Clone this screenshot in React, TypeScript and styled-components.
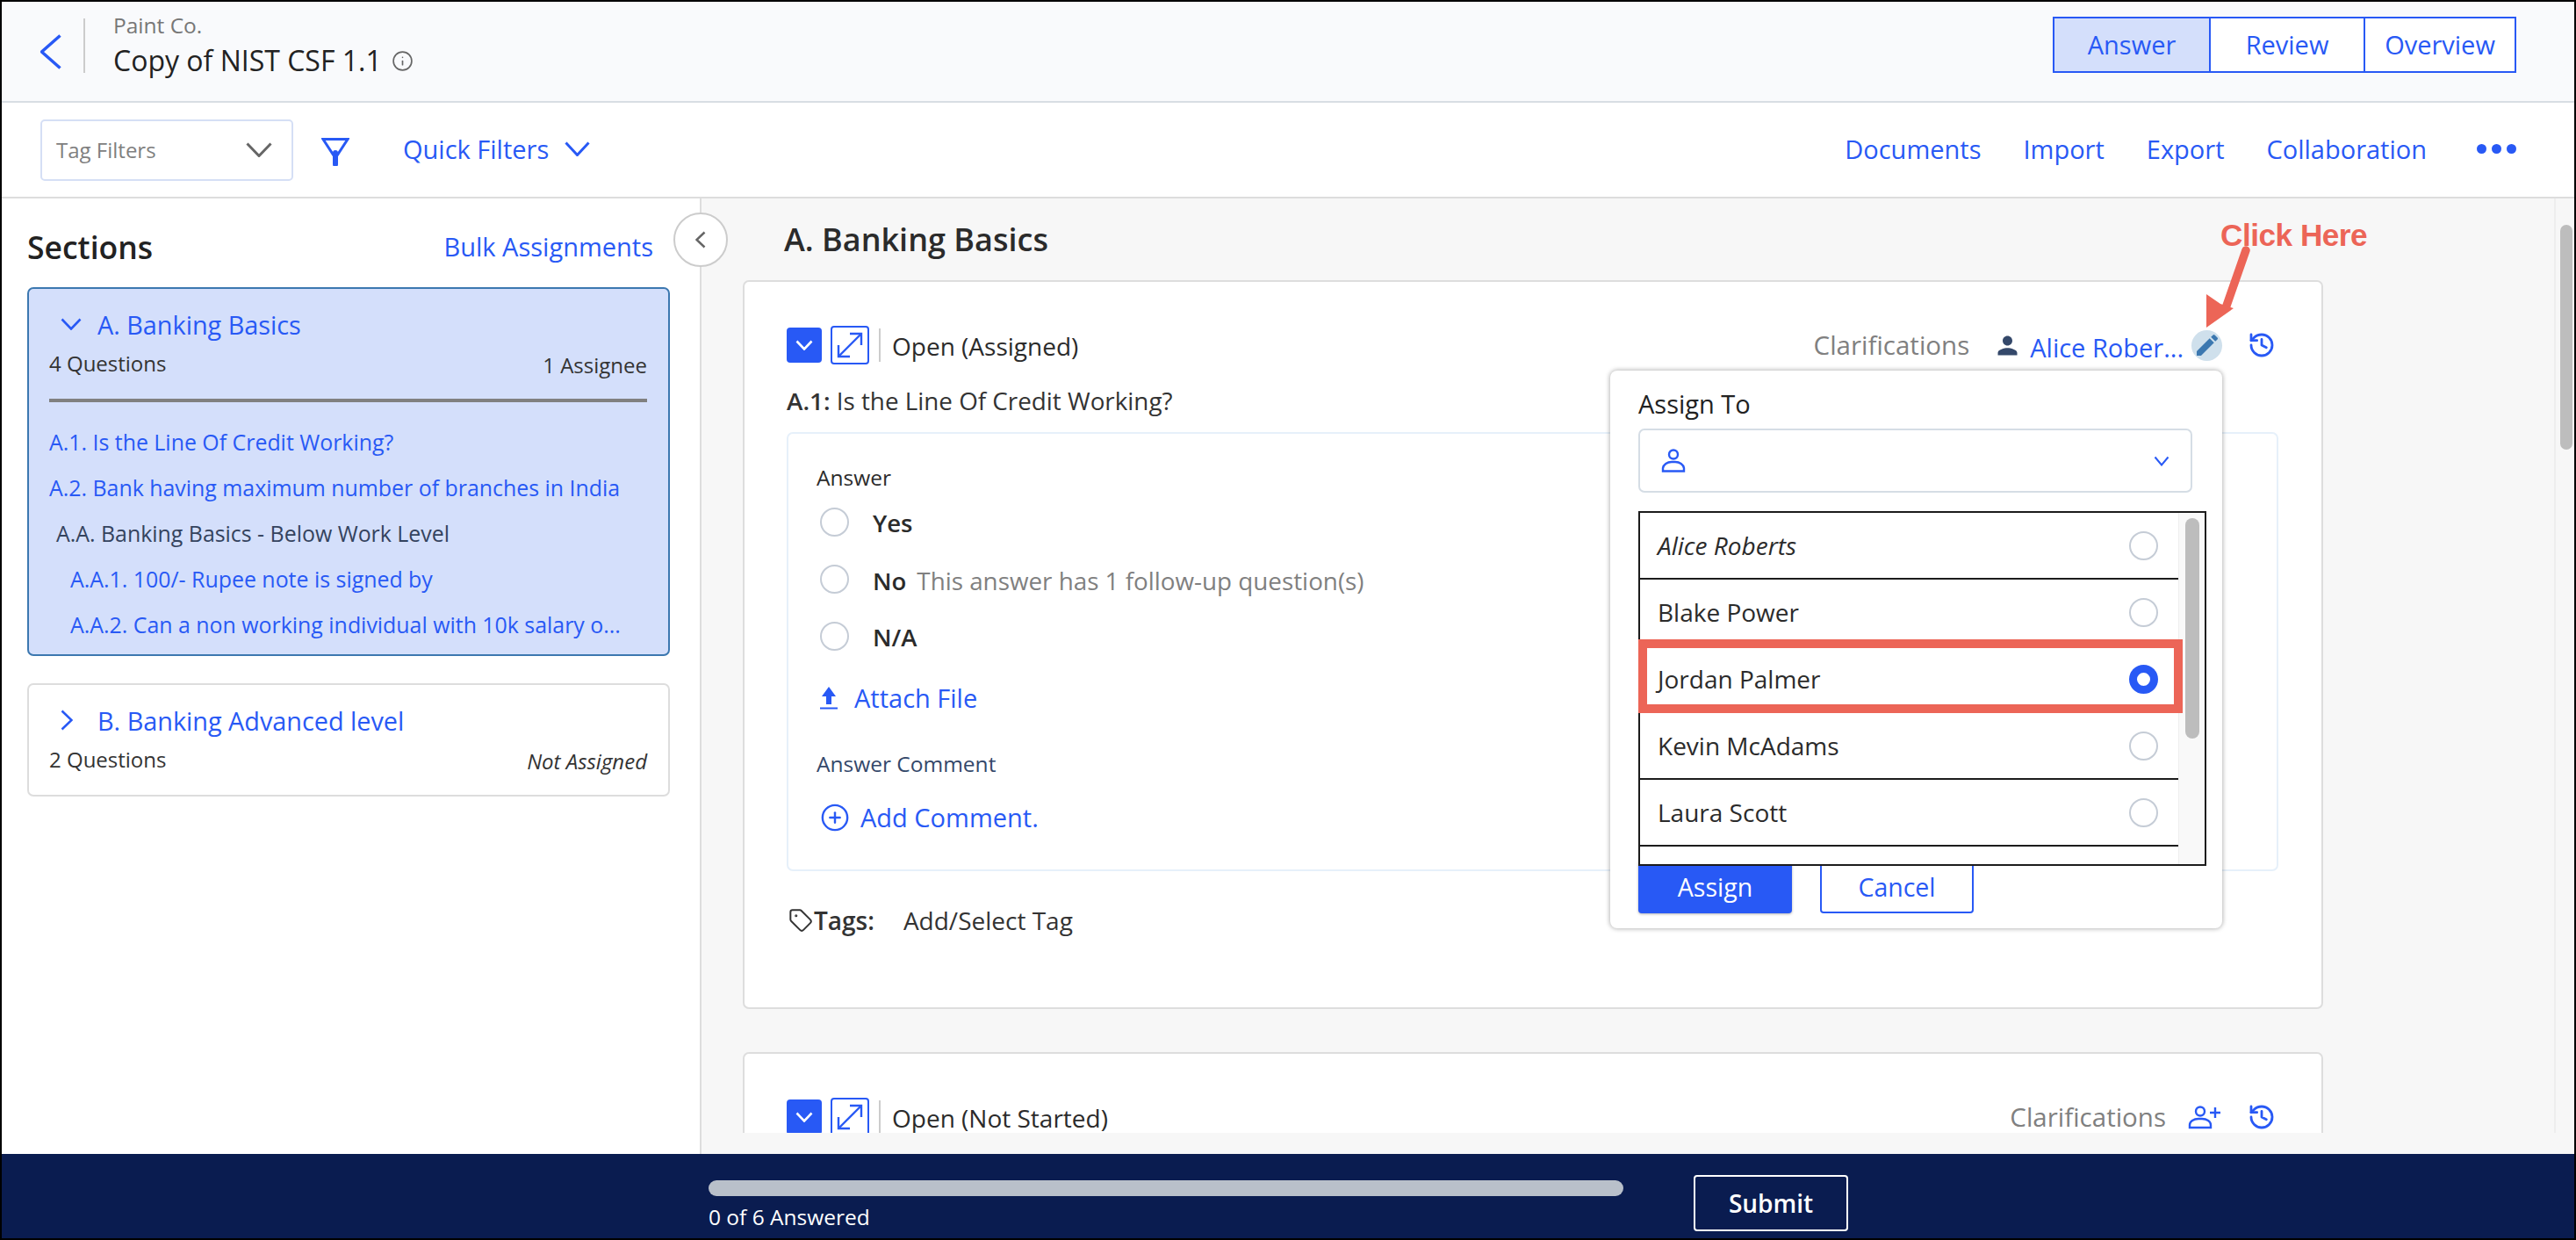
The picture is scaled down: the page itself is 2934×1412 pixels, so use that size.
import React from "react";
import styled, { createGlobalStyle } from "styled-components";
import { MdEdit, MdPerson } from "react-icons/md";
import { History, CirclePlus, Tag, Info } from "lucide-react";

const BLUE = "#2859f5";
const RED = "#ec6557";

const Global = createGlobalStyle`
  html, body { margin: 0; padding: 0; background: #fff; }
  body { font-family: "Open Sans", "Noto Sans", sans-serif; color: #2b2b2b; }
  * { box-sizing: border-box; }
`;

const Frame = styled.div`
  position: relative; width: 2934px; height: 1412px; border: 2px solid #000;
  display: flex; flex-direction: column; overflow: hidden; background: #fff;
`;

const Header = styled.header`
  height: 115px; flex: none; background: #f9fafc; border-bottom: 2px solid #d8dee3;
  display: flex; align-items: center; padding: 0 66px 0 44px;
`;
const BackLink = styled.span`display: flex; width: 24px; margin-right: 25px; color: ${BLUE};`;
const HeaderRule = styled.span`width: 2px; height: 62px; background: #ccc; margin-right: 32px; margin-top: -14px;`;
const TitleBlock = styled.div`display: flex; flex-direction: column; margin-top: -14px;`;
const Org = styled.div`font-size: 24.5px; line-height: 28px; color: #777;`;
const Title = styled.div`font-size: 32px; font-weight: 500; line-height: 38px; margin-top: 7px; display: flex; align-items: center; gap: 11px; color: #222;`;
const InfoMark = styled.span`display: flex; color: #666;`;

const Segmented = styled.div`
  margin-left: auto; margin-top: -15px; width: 528px; height: 64px; border: 2px solid ${BLUE};
  display: grid; grid-template-columns: 176px 176px 1fr; background: #fff;
`;
const Segment = styled.div<{ $active?: boolean }>`
  display: flex; align-items: center; justify-content: center; font-size: 29px; font-weight: 500; color: ${BLUE}; padding-bottom: 2px;
  background: ${(p) => (p.$active ? "#d4dffb" : "#fff")};
  & + & { border-left: 2px solid ${BLUE}; }
`;

const Toolbar = styled.div`
  height: 109px; flex: none; border-bottom: 2px solid #ddd; display: flex; align-items: center; padding: 0 66px 0 44px;
`;
const TagFilter = styled.div`
  width: 288px; height: 70px; border: 2px solid #d5dff5; border-radius: 5px; display: flex; align-items: center;
  justify-content: space-between; padding: 0 22px 0 16px; font-size: 24px; color: #808080; background: #fff;
`;
const FunnelWrap = styled.span`display: flex; margin-left: 32px; margin-top: 3px;`;
const QuickFilters = styled.div`
  margin-left: 61px; display: flex; align-items: center; gap: 18px; color: ${BLUE}; font-size: 29px; font-weight: 500; margin-top: -2px;
`;
const ToolLinks = styled.nav`margin-left: auto; display: flex; align-items: center; gap: 48px; margin-top: -2px;`;
const ToolLink = styled.span`color: ${BLUE}; font-size: 29px; font-weight: 500;`;
const Dots = styled.span`display: flex; gap: 6px; margin-left: 9px; margin-top: 0;`;
const Dot = styled.span`width: 11px; height: 11px; border-radius: 50%; background: ${BLUE};`;

const Body = styled.div`flex: 1; display: flex; min-height: 0;`;
const Sidebar = styled.aside`
  position: relative; width: 797px; flex: none; border-right: 2px solid #ddd; padding: 0 0 0 29px; background: #fff;
`;
const SidebarHead = styled.div`
  width: 713px; height: 101px; display: flex; align-items: center; justify-content: space-between; padding-top: 8px;
`;
const SidebarTitle = styled.div`font-size: 35.5px; font-weight: 600; color: #222;`;
const BulkLink = styled.span`font-size: 29px; font-weight: 500; color: ${BLUE};`;
const Collapse = styled.span`
  position: absolute; right: -32px; top: 16px; width: 62px; height: 62px; border-radius: 50%; background: #fff;
  border: 2px solid #ccc; display: flex; align-items: center; justify-content: center; z-index: 2;
`;
const SectionCard = styled.section<{ $active?: boolean }>`
  width: 732px; border-radius: 7px; padding: 0 24px 0 23px;
  border: 2px solid ${(p) => (p.$active ? "#3c78b0" : "#ddd")};
  background: ${(p) => (p.$active ? "#d4dffb" : "#fff")};
  height: ${(p) => (p.$active ? "420px" : "129px")};
  & + & { margin-top: 31px; }
`;
const SectionHead = styled.div`display: flex; align-items: center; height: 36px; margin-top: 22px; color: ${BLUE}; font-size: 28.8px; font-weight: 500;`;
const SectionChevron = styled.span`display: flex; width: 55px; padding-left: 13px;`;
const SectionMeta = styled.div`display: flex; justify-content: space-between; font-size: 24px; line-height: 30px; margin-top: 12px; color: #333;`;
const MetaRight = styled.span<{ $italic?: boolean }>`margin-top: 2px; font-style: ${(p) => (p.$italic ? "italic" : "normal")};`;
const SectionRule = styled.div`height: 4px; background: #808080; margin-top: 23px; margin-bottom: 23px;`;
const QuestionLink = styled.div<{ $indent?: number; $plain?: boolean }>`
  height: 52px; line-height: 44px; font-size: 24.9px; font-weight: 500; white-space: nowrap;
  padding-left: ${(p) => p.$indent || 0}px; color: ${(p) => (p.$plain ? "#34435e" : BLUE)};
`;

const Content = styled.main`flex: 1; display: flex; flex-direction: column; background: #f7f7f7; min-width: 0;`;
const Viewport = styled.div`height: 1064px; display: flex; overflow: hidden;`;
const Scroller = styled.div`flex: 1; padding-left: 47px; min-width: 0;`;
const MainHeading = styled.h1`
  margin: 0; height: 93px; display: flex; align-items: center; padding: 0 0 0 47px; font-size: 36px; font-weight: 600; color: #2b2b2b;
`;
const QuestionCard = styled.article<{ $height: number }>`
  position: relative; width: 1800px; height: ${(p) => p.$height}px; background: #fff; border: 2px solid #ddd; border-radius: 7px;
  padding: 50px 52px 0 48px;
  & + & { margin-top: 49px; }
`;
const CardTop = styled.div`height: 44px; display: flex; align-items: center;`;
const ToggleButton = styled.span`
  width: 40px; height: 40px; border-radius: 4px; background: ${BLUE}; display: flex; align-items: center; justify-content: center;
`;
const ExpandButton = styled.span`
  width: 44px; height: 44px; margin-left: 10px; border: 2px solid ${BLUE}; border-radius: 4px; display: flex; align-items: center; justify-content: center;
`;
const StatusRule = styled.span`width: 2px; height: 38px; background: #ccc; margin: 0 13px 0 11px;`;
const Status = styled.span`font-size: 28px; line-height: 36px; padding-top: 1px; color: #2b2b2b;`;
const CardActions = styled.div`margin-left: auto; display: flex; align-items: center;`;
const Clarify = styled.span<{ $gap: number }>`font-size: 29.5px; line-height: 36px; font-weight: 500; color: #808080; margin-right: ${(p) => p.$gap}px;`;
const PersonIcon = styled.span`display: flex; color: #34486a; margin-right: 9px; margin-left: -4px;`;
const Assignee = styled.span`color: ${BLUE}; font-size: 29px; font-weight: 500; margin-top: 4px;`;
const PencilBadge = styled.span`
  width: 35px; height: 35px; border-radius: 50%; background: #cfe0ec; color: #3c78b0; display: flex; align-items: center; justify-content: center;
  margin: 0 29px 0 9px;
`;
const AddUser = styled.span`display: flex; margin-right: 30px;`;
const HistoryMark = styled.span`display: flex; color: ${BLUE};`;
const QuestionLine = styled.div`font-size: 27.8px; line-height: 36px; margin-top: 23px; color: #333;`;
const QuestionNo = styled.span`font-weight: 600;`;

const AnswerBox = styled.div`
  margin: 18px -3px 0 0; height: 500px; border: 2px solid #e6f0fa; border-radius: 7px; padding: 36px 32px 0;
`;
const FieldLabel = styled.div<{ $muted?: boolean; $top?: number }>`
  font-size: 24.5px; line-height: 28px; font-weight: 500; color: ${(p) => (p.$muted ? "#34486a" : "#2b2b2b")};
  margin-top: ${(p) => p.$top || 0}px;
`;
const Options = styled.div`margin-top: 4px;`;
const OptionRow = styled.div`height: 65px; display: flex; align-items: center; padding-left: 4px; gap: 27px; font-size: 27.5px; font-weight: 600;`;
const Radio = styled.span<{ $on?: boolean }>`
  flex: none; width: 33px; height: 33px; border-radius: 50%;
  border: ${(p) => (p.$on ? `9px solid ${BLUE}` : "2.5px solid #c5ccd6")}; background: #fff;
`;
const OptionLabel = styled.span`color: #2b2b2b; margin-top: 2px;`;
const FollowUp = styled.span`color: #808080; font-weight: 400; font-size: 27.8px; margin-left: 12px;`;
const ActionLink = styled.div<{ $top: number; $gap: number }>`
  display: flex; align-items: center; height: 36px; margin-top: ${(p) => p.$top}px; padding-left: 4px; gap: ${(p) => p.$gap}px;
  color: ${BLUE}; font-size: 29px; font-weight: 500; line-height: 32px;
`;
const TagsRow = styled.div`display: flex; align-items: center; height: 36px; margin-top: 38px; font-size: 28px; color: #333;`;
const TagsLabel = styled.span`font-weight: 600; margin-right: 33px; margin-left: 1px;`;
const TagIcon = styled.span`display: flex; color: #333; margin-left: 2px;`;

const Popover = styled.div`
  position: absolute; left: 986px; top: 101px; width: 697px; height: 635px; background: #fff; border-radius: 8px;
  box-shadow: 0 0 5px 1px rgba(0, 0, 0, 0.28); padding: 20px 32px 0; z-index: 3;
`;
const PopoverTitle = styled.div`font-size: 29px; font-weight: 500; line-height: 36px; color: #222;`;
const AssignSelect = styled.div`
  margin-top: 10px; width: 631px; height: 73px; border: 2px solid #d5dde5; border-radius: 7px; display: flex; align-items: center;
  justify-content: space-between; padding: 0 24px;
`;
const PeopleList = styled.div`
  position: relative; z-index: 1; margin-top: 21px; width: 647px; height: 404px; border: 2px solid #1c1c1c; background: #fff; display: flex;
`;
const Rows = styled.div`flex: 1; overflow: hidden; min-width: 0;`;
const PersonRow = styled.div<{ $italic?: boolean }>`
  height: 76px; border-bottom: 2px solid #1c1c1c; display: flex; align-items: center; justify-content: space-between;
  padding: 0 23px 0 20px; font-size: 28px; color: #2b2b2b; font-style: ${(p) => (p.$italic ? "italic" : "normal")};
`;
const ListTrack = styled.div`width: 30px; flex: none; background: #f9f9f9; border-left: 1px solid #eee; padding: 6px 6px 0 7px;`;
const ListThumb = styled.div`height: 251px; border-radius: 8px; background: #bdbdbd;`;
const Highlight = styled.div`
  position: absolute; left: -2px; top: 144px; width: 620px; height: 84px; border: 10px solid ${RED}; pointer-events: none;
`;
const ButtonRow = styled.div`display: flex; gap: 32px; margin-top: -6px;`;
const PrimaryButton = styled.span`
  width: 175px; height: 60px; background: ${BLUE}; color: #fff; font-size: 28.5px; font-weight: 500; border-radius: 4px;
  display: flex; align-items: center; justify-content: center; box-shadow: 0 1px 3px rgba(0,0,0,.3);
`;
const SecondaryButton = styled(PrimaryButton)`background: #fff; color: ${BLUE}; border: 2px solid ${BLUE}; box-shadow: none;`;

const ScrollTrack = styled.div`width: 23px; flex: none; border-left: 2px solid #eee; padding: 30px 2px 0 5px;`;
const ScrollThumb = styled.div`height: 256px; border-radius: 8px; background: #bdbdbd;`;

const Footer = styled.footer`
  height: 96px; flex: none; background: #0a1c50; display: flex; align-items: flex-start; padding: 24px 0 0 805px; margin-top: 0;
`;
const Progress = styled.div`width: 1042px; padding-top: 6px;`;
const ProgressBar = styled.div`height: 18px; border-radius: 9px; background: #b9c0ca;`;
const ProgressText = styled.div`color: #fff; font-size: 24.5px; line-height: 28px; margin-top: 10px; font-weight: 500;`;
const SubmitButton = styled.span`
  margin-left: 80px; width: 176px; height: 64px; border: 2px solid #fff; border-radius: 4px; color: #fff; font-size: 28px; font-weight: 600;
  display: flex; align-items: center; justify-content: center;
`;

const CalloutText = styled.div`
  position: absolute; left: 2527px; top: 246px; font-family: "Liberation Sans", Arial, sans-serif; font-weight: 700; font-size: 35.2px; line-height: 40px;
  color: ${RED}; z-index: 5; letter-spacing: -0.5px;
`;
const CalloutArrow = styled.svg`position: absolute; left: 2498px; top: 276px; z-index: 5;`;

type ChevronProps = { w: number; h: number; dir?: "down" | "right" | "left"; color?: string; sw?: number };
const Chevron = ({ w, h, dir = "down", color = BLUE, sw = 3 }: ChevronProps) => {
  const pts =
    dir === "down"
      ? `1.5,1.5 ${w / 2},${h - 1.5} ${w - 1.5},1.5`
      : dir === "right"
      ? `1.5,1.5 ${w - 1.5},${h / 2} 1.5,${h - 1.5}`
      : `${w - 1.5},1.5 1.5,${h / 2} ${w - 1.5},${h - 1.5}`;
  return (
    <svg width={w} height={h} viewBox={`0 0 ${w} ${h}`} fill="none">
      <polyline points={pts} stroke={color} strokeWidth={sw} />
    </svg>
  );
};

const FunnelIcon = () => (
  <svg width="32" height="33" viewBox="0 0 32 33" fill="none">
    <path d="M2 2.5 H30 L16 24 Z" stroke={BLUE} strokeWidth="3" strokeLinejoin="miter" />
    <path d="M16 18 V31" stroke={BLUE} strokeWidth="6" strokeLinecap="round" />
  </svg>
);
const ExpandIcon = () => (
  <svg width="36" height="36" viewBox="0 0 36 36" fill="none" stroke={BLUE} strokeWidth="2.4">
    <path d="M5 31 L31 5" />
    <path d="M18 5 H31 V18" />
    <path d="M5 18 V31 H18" />
  </svg>
);
const UploadIcon = () => (
  <svg width="20" height="26" viewBox="0 0 20 26" fill={BLUE}>
    <path d="M10 0 L18 11 H13 V20 H7 V11 H2 Z" />
    <rect x="0" y="23.5" width="20" height="2" />
  </svg>
);
const OutlineUser = () => (
  <svg width="28" height="27" viewBox="0 0 28 27" fill="none" stroke={BLUE} strokeWidth="2.4">
    <circle cx="14" cy="6.5" r="5" />
    <path d="M2 25.5 V22 A10 8 0 0 1 12 15 H16 A10 8 0 0 1 26 22 V25.5 Z" />
  </svg>
);
const AddUserIcon = () => (
  <svg width="38" height="28" viewBox="0 0 38 28" fill="none" stroke={BLUE} strokeWidth="2.4">
    <circle cx="14" cy="7.5" r="5" />
    <path d="M2 26 V23 A10 7 0 0 1 12 16 H16 A10 7 0 0 1 26 23 V26 Z" />
    <path d="M25 9 H37 M31 3 V15" />
  </svg>
);

const people = ["Alice Roberts", "Blake Power", "Jordan Palmer", "Kevin McAdams", "Laura Scott", ""];

export default function App() {
  return (
    <Frame>
      <Global />
      <Header>
        <BackLink><Chevron w={24} h={40} dir="left" sw={3.5} /></BackLink>
        <HeaderRule />
        <TitleBlock>
          <Org>Paint Co.</Org>
          <Title>
            Copy of NIST CSF 1.1
            <InfoMark><Info size={25} strokeWidth={1.6} /></InfoMark>
          </Title>
        </TitleBlock>
        <Segmented>
          <Segment $active>Answer</Segment>
          <Segment>Review</Segment>
          <Segment>Overview</Segment>
        </Segmented>
      </Header>

      <Toolbar>
        <TagFilter>
          Tag Filters
          <Chevron w={30} h={17} color="#666" sw={3} />
        </TagFilter>
        <FunnelWrap><FunnelIcon /></FunnelWrap>
        <QuickFilters>
          Quick Filters
          <Chevron w={29} h={17} sw={3} />
        </QuickFilters>
        <ToolLinks>
          <ToolLink>Documents</ToolLink>
          <ToolLink>Import</ToolLink>
          <ToolLink>Export</ToolLink>
          <ToolLink>Collaboration</ToolLink>
          <Dots><Dot /><Dot /><Dot /></Dots>
        </ToolLinks>
      </Toolbar>

      <Body>
        <Sidebar>
          <SidebarHead>
            <SidebarTitle>Sections</SidebarTitle>
            <BulkLink>Bulk Assignments</BulkLink>
          </SidebarHead>
          <Collapse><Chevron w={12} h={20} dir="left" color="#666" sw={2.5} /></Collapse>
          <SectionCard $active>
            <SectionHead>
              <SectionChevron><Chevron w={24} h={14} sw={2.6} /></SectionChevron>
              A. Banking Basics
            </SectionHead>
            <SectionMeta><span>4 Questions</span><MetaRight>1 Assignee</MetaRight></SectionMeta>
            <SectionRule />
            <QuestionLink>A.1. Is the Line Of Credit Working?</QuestionLink>
            <QuestionLink>A.2. Bank having maximum number of branches in India</QuestionLink>
            <QuestionLink $indent={8} $plain>A.A. Banking Basics - Below Work Level</QuestionLink>
            <QuestionLink $indent={24}>A.A.1. 100/- Rupee note is signed by</QuestionLink>
            <QuestionLink $indent={24}>A.A.2. Can a non working individual with 10k salary o...</QuestionLink>
          </SectionCard>
          <SectionCard>
            <SectionHead>
              <SectionChevron><Chevron w={14} h={24} dir="right" sw={2.6} /></SectionChevron>
              B. Banking Advanced level
            </SectionHead>
            <SectionMeta><span>2 Questions</span><MetaRight $italic>Not Assigned</MetaRight></SectionMeta>
          </SectionCard>
        </Sidebar>

        <Content>
          <Viewport>
            <Scroller>
              <MainHeading>A. Banking Basics</MainHeading>
              <QuestionCard $height={830}>
                <CardTop>
                  <ToggleButton><Chevron w={20} h={12} color="#fff" sw={2.6} /></ToggleButton>
                  <ExpandButton><ExpandIcon /></ExpandButton>
                  <StatusRule />
                  <Status>Open (Assigned)</Status>
                  <CardActions>
                    <Clarify $gap={31}>Clarifications</Clarify>
                    <PersonIcon><MdPerson size={33} /></PersonIcon>
                    <Assignee>Alice Rober...</Assignee>
                    <PencilBadge><MdEdit size={32} /></PencilBadge>
                    <HistoryMark><History size={32} strokeWidth={2.1} /></HistoryMark>
                  </CardActions>
                </CardTop>
                <QuestionLine><QuestionNo>A.1:</QuestionNo> Is the Line Of Credit Working?</QuestionLine>
                <AnswerBox>
                  <FieldLabel>Answer</FieldLabel>
                  <Options>
                    <OptionRow><Radio /><OptionLabel>Yes</OptionLabel></OptionRow>
                    <OptionRow>
                      <Radio />
                      <OptionLabel>No<FollowUp>This answer has 1 follow-up question(s)</FollowUp></OptionLabel>
                    </OptionRow>
                    <OptionRow><Radio /><OptionLabel>N/A</OptionLabel></OptionRow>
                  </Options>
                  <ActionLink $top={20} $gap={19}><UploadIcon />Attach File</ActionLink>
                  <FieldLabel $muted $top={43}>Answer Comment</FieldLabel>
                  <ActionLink $top={29} $gap={12}><CirclePlus size={34} strokeWidth={1.7} />Add Comment.</ActionLink>
                </AnswerBox>
                <TagsRow>
                  <TagIcon><Tag size={28} strokeWidth={1.7} /></TagIcon>
                  <TagsLabel>Tags:</TagsLabel>
                  Add/Select Tag
                </TagsRow>
                <Popover>
                  <PopoverTitle>Assign To</PopoverTitle>
                  <AssignSelect>
                    <OutlineUser />
                    <Chevron w={18} h={12} sw={2} />
                  </AssignSelect>
                  <PeopleList>
                    <Rows>
                      {people.map((name, i) => (
                        <PersonRow key={i} $italic={i === 0}>
                          <span>{name}</span>
                          <Radio $on={i === 2} />
                        </PersonRow>
                      ))}
                    </Rows>
                    <ListTrack><ListThumb /></ListTrack>
                    <Highlight />
                  </PeopleList>
                  <ButtonRow>
                    <PrimaryButton>Assign</PrimaryButton>
                    <SecondaryButton>Cancel</SecondaryButton>
                  </ButtonRow>
                </Popover>
              </QuestionCard>
              <QuestionCard $height={400}>
                <CardTop>
                  <ToggleButton><Chevron w={20} h={12} color="#fff" sw={2.6} /></ToggleButton>
                  <ExpandButton><ExpandIcon /></ExpandButton>
                  <StatusRule />
                  <Status>Open (Not Started)</Status>
                  <CardActions>
                    <Clarify $gap={25}>Clarifications</Clarify>
                    <AddUser><AddUserIcon /></AddUser>
                    <HistoryMark><History size={32} strokeWidth={2.1} /></HistoryMark>
                  </CardActions>
                </CardTop>
              </QuestionCard>
            </Scroller>
            <ScrollTrack><ScrollThumb /></ScrollTrack>
          </Viewport>
        </Content>
      </Body>

      <Footer>
        <Progress>
          <ProgressBar />
          <ProgressText>0 of 6 Answered</ProgressText>
        </Progress>
        <SubmitButton>Submit</SubmitButton>
      </Footer>

      <CalloutText>Click Here</CalloutText>
      <CalloutArrow width="70" height="100" viewBox="0 0 70 100" fill={RED}>
        <path d="M58 7 L36 70" stroke={RED} strokeWidth="9.5" strokeLinecap="round" fill="none" />
        <path d="M13 95 L13 57 L29 68 L44 73 Z" />
      </CalloutArrow>
    </Frame>
  );
}
